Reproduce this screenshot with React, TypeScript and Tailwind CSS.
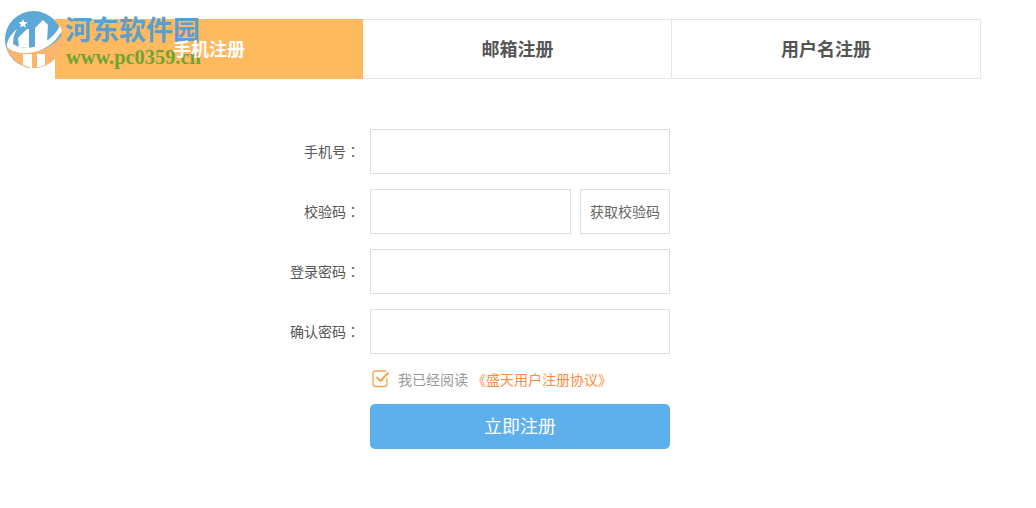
const tabs = ["手机注册", "邮箱注册", "用户名注册"];

const fields = [
  { label: "手机号", code: false },
  { label: "校验码", code: true },
  { label: "登录密码", code: false },
  { label: "确认密码", code: false },
];

function Watermark() {
  return (
    <div className="absolute left-[5px] top-[11px] z-10 h-[58px] w-[200px]">
      <svg width="58" height="58" viewBox="0 0 58 58" className="absolute left-0 top-0">
        <circle cx="28.500" cy="28.500" r="28.500" fill="#5ea8d8" />
        {/* lower bowl */}
        <path d="M1 36 C14 46 42 44 57 24 A28.500 28.500 0 0 1 28 57 C16 57 6 49 1 36 Z" fill="#fbb56c" />
        {/* swoosh */}
        <path d="M12 18 C5 24 1 31 2 36 C14 47 44 44 57 20 L55 15 C46 32 24 43 8 33 C8 28 9 23 12 18 Z" fill="#fff" />
        {/* rising bars */}
        <path d="M13 27 L22 18 L24 18 L24 37 L14 36 Z" fill="#fff" />
        <path d="M30 17 L38 9 L43 14 L42 31 L30 37 Z" fill="#fff" />
        <path d="M18 43 H27 V57 L18 54 Z M32 43 H40 V54 L32 57 Z" fill="#fff" />
        <path d="M18 8 L19.300 11 L22.500 11.300 L20.100 13.400 L20.800 16.500 L18 14.900 L15.200 16.500 L15.900 13.400 L13.500 11.300 L16.700 11 Z" fill="#fff" />
      </svg>
      <span className="absolute left-[60px] top-[1px] whitespace-nowrap font-['Noto_Sans_CJK_SC',sans-serif] text-[27px] leading-[34px] font-bold text-[#5b9fcb]">
        河东软件园
      </span>
      <span className="absolute left-[61px] top-[36px] whitespace-nowrap font-['Liberation_Serif',serif] text-[20.400px] leading-[20px] font-bold text-[#6ea52f]">
        www.pc0359.cn
      </span>
    </div>
  );
}

export default function App() {
  return (
    <div className="relative h-[508px] w-[1036px] overflow-hidden bg-white font-['Noto_Sans_CJK_SC','Noto_Sans',sans-serif]">
      <Watermark />

      {/* Tabs */}
      <div className="ml-[55px] mt-[19px] flex h-[60px] w-[926px]">
        {tabs.map((t, i) => (
          <div
            key={t}
            className={
              i === 0
                ? "flex w-[308px] items-center justify-center bg-[#ffb95f] pb-[2px] text-lg font-bold text-white"
                : i === 1
                  ? "flex w-[309px] items-center justify-center border border-l-0 border-[#e6e6e6] pb-[2px] pl-[1px] text-lg font-bold text-[#555555]"
                  : "flex flex-1 items-center justify-center border border-l-0 border-[#e6e6e6] pb-[2px] text-lg font-bold text-[#555555]"
            }
          >
            <span className="relative z-20">{t}</span>
          </div>
        ))}
      </div>

      {/* Form */}
      <div className="ml-[278px] mt-[50px] flex w-[392px] flex-col gap-[15px]">
        {fields.map((f) => (
          <div key={f.label} className="flex h-[45px] items-center">
            <label className="mr-[10px] w-[82px] pb-[2px] text-right text-sm whitespace-nowrap text-[#555555]">
              {f.label}
              <span className="font-['Noto_Sans_CJK_TC',sans-serif]">：</span>
            </label>
            <div className="h-full min-w-0 flex-1 border border-[#dcdfe2] bg-white" />
            {f.code && (
              <button className="ml-[9px] h-full w-[90px] shrink-0 border border-[#dcdfe2] pb-[2px] text-sm text-[#666666]">
                获取校验码
              </button>
            )}
          </div>
        ))}
      </div>

      <div className="ml-[370px] mt-[15px] flex h-[20px] items-center text-sm">
        <svg width="18" height="18" viewBox="0 0 18 18" fill="none" className="ml-[2px] shrink-0">
          <path d="M15 8 V14 A2.500 2.500 0 0 1 12.500 16.500 H3.500 A2.500 2.500 0 0 1 1 14 V3.500 A2.500 2.500 0 0 1 3.500 1 H14" stroke="#f7a250" strokeWidth="1.300" />
          <path d="M4.500 7 L8.500 11 L16.500 2.500" stroke="#f7a250" strokeWidth="2" />
        </svg>
        <span className="ml-[8px] text-[#999999]">我已经阅读</span>
        <span className="ml-[4px] text-[#ff8c3c]">《盛天用户注册协议》</span>
      </div>

      <button className="ml-[370px] mt-[15px] block h-[45px] w-[300px] rounded-[5px] bg-[#5eb0ec] pb-[3px] text-lg text-white">
        立即注册
      </button>
    </div>
  );
}
